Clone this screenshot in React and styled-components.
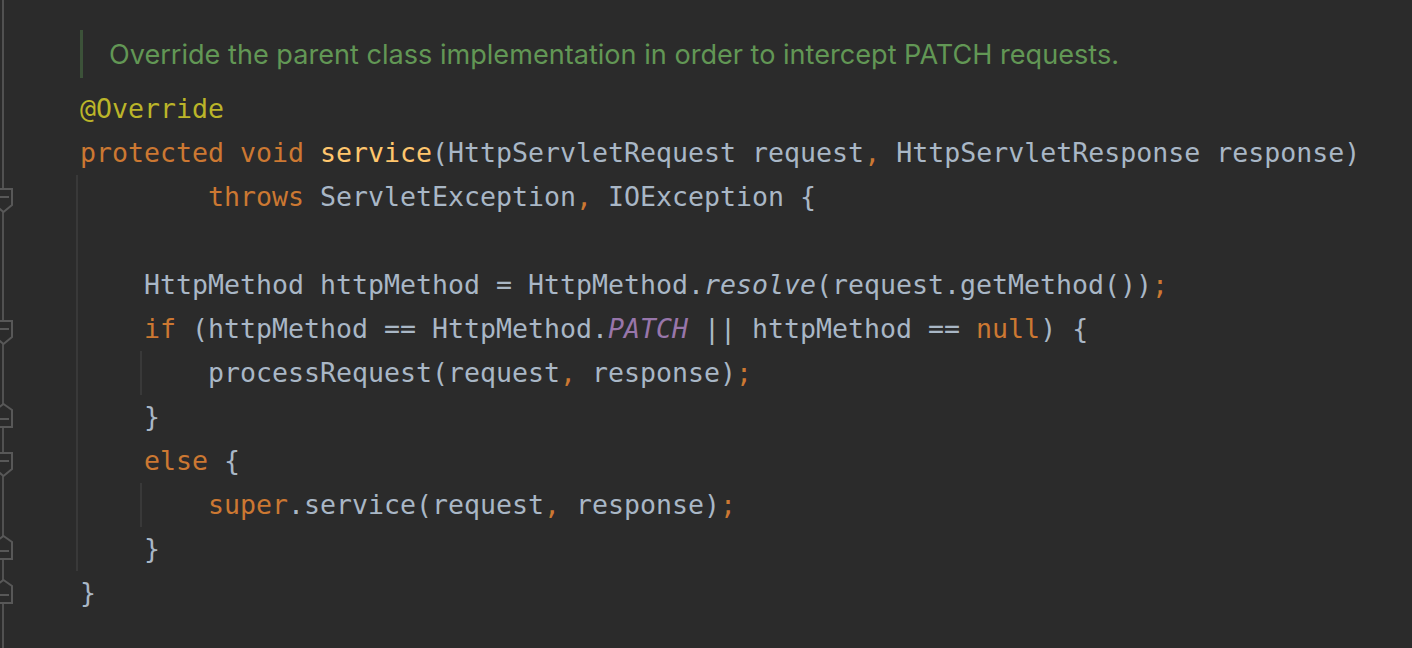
import styled, { createGlobalStyle } from "styled-components";

const GlobalStyle = createGlobalStyle`
  html, body {
    margin: 0;
    padding: 0;
    background: #2b2b2b;
  }
  body {
    width: 1412px;
    height: 648px;
    overflow: hidden;
  }
`;

const ROW = 44;
const CH = 16;

const Editor = styled.div`
  display: flex;
  width: 1412px;
  height: 648px;
  background: #2b2b2b;
  overflow: hidden;
`;

const Gutter = styled.div`
  width: 14px;
  flex-shrink: 0;
  display: flex;
  flex-direction: column;
  padding-top: 87px;
  background: linear-gradient(
    to right,
    transparent 2px,
    #515151 2px,
    #515151 4px,
    transparent 4px
  );
`;

const GutterRow = styled.div`
  height: ${ROW}px;
  display: flex;
`;

const Code = styled.div`
  flex: 1;
  padding: 30px 0 0 66px;
  font-family: "DejaVu Sans Mono", "Liberation Mono", monospace;
  font-size: 26.58px;
  color: #a9b7c6;
`;

const DocBlock = styled.div`
  display: flex;
  align-items: center;
  height: 48px;
  margin-bottom: 9px;
  border-left: 3px solid #3c5239;
  padding-left: 26px;
  font-family: Inter, "Noto Sans", sans-serif;
  font-size: 27.1px;
  color: #629755;
`;

const Line = styled.div`
  height: ${ROW}px;
  line-height: ${ROW}px;
  white-space: pre;
  padding-left: ${(p) => (p.$indent || 0) * CH}px;
`;

const Guide = styled.div`
  margin-left: ${(p) => p.$col * CH - 4}px;
  border-left: 2px solid #393939;
  padding-left: 2px;
`;

const colors = {
  kw: "#cc7832",
  ann: "#bbb529",
  fn: "#ffc66d",
  st: "#9876aa",
  it: "#a9b7c6",
};

const Tok = styled.span`
  color: ${(p) => colors[p.$k] || "#a9b7c6"};
  font-style: ${(p) => (p.$k === "st" || p.$k === "it" ? "italic" : "normal")};
`;

const FoldMarker = ({ up }) => (
  <svg width="14" height={ROW} viewBox={`0 0 14 ${ROW}`}>
    {up ? (
      <>
        <path
          d="M3.5 9 L12 15 V32 H-5 V15 Z"
          fill="#2b2b2b"
          stroke="#585858"
          strokeWidth="2"
          strokeLinejoin="miter"
        />
        <path d="M-3 24 H9" stroke="#585858" strokeWidth="2" />
      </>
    ) : (
      <>
        <path
          d="M-5 14 H12 V30 L3.5 37 L-5 30 Z"
          fill="#2b2b2b"
          stroke="#585858"
          strokeWidth="2"
          strokeLinejoin="miter"
        />
        <path d="M-3 22 H9" stroke="#585858" strokeWidth="2" />
      </>
    )}
  </svg>
);

// fold markers per row: null, "down" or "up"
const folds = [null, null, "down", null, null, "down", null, "up", "down", null, "up", "up"];

const L = ({ indent, children }) => <Line $indent={indent}>{children}</Line>;

const App = () => {
  return (
    <Editor>
      <GlobalStyle />
      <Gutter>
        {folds.map((f, i) => (
          <GutterRow key={i}>{f && <FoldMarker up={f === "up"} />}</GutterRow>
        ))}
      </Gutter>
      <Code>
        <DocBlock>
          Override the parent class implementation in order to intercept PATCH requests.
        </DocBlock>
        <L>
          <Tok $k="ann">@Override</Tok>
        </L>
        <L>
          <Tok $k="kw">protected</Tok> <Tok $k="kw">void</Tok>{" "}
          <Tok $k="fn">service</Tok>(HttpServletRequest request<Tok $k="kw">,</Tok>{" "}
          HttpServletResponse response)
        </L>
        <Guide $col={0}>
          <L indent={8}>
            <Tok $k="kw">throws</Tok> ServletException<Tok $k="kw">,</Tok> IOException {"{"}
          </L>
          <L> </L>
          <L indent={4}>
            HttpMethod httpMethod = HttpMethod.<Tok $k="it">resolve</Tok>
            (request.getMethod())<Tok $k="kw">;</Tok>
          </L>
          <L indent={4}>
            <Tok $k="kw">if</Tok> (httpMethod == HttpMethod.<Tok $k="st">PATCH</Tok> ||
            httpMethod == <Tok $k="kw">null</Tok>) {"{"}
          </L>
          <Guide $col={4}>
            <L indent={4}>
              processRequest(request<Tok $k="kw">,</Tok> response)<Tok $k="kw">;</Tok>
            </L>
          </Guide>
          <L indent={4}>{"}"}</L>
          <L indent={4}>
            <Tok $k="kw">else</Tok> {"{"}
          </L>
          <Guide $col={4}>
            <L indent={4}>
              <Tok $k="kw">super</Tok>.service(request<Tok $k="kw">,</Tok> response)
              <Tok $k="kw">;</Tok>
            </L>
          </Guide>
          <L indent={4}>{"}"}</L>
        </Guide>
        <L>{"}"}</L>
      </Code>
    </Editor>
  );
};

export default App;
